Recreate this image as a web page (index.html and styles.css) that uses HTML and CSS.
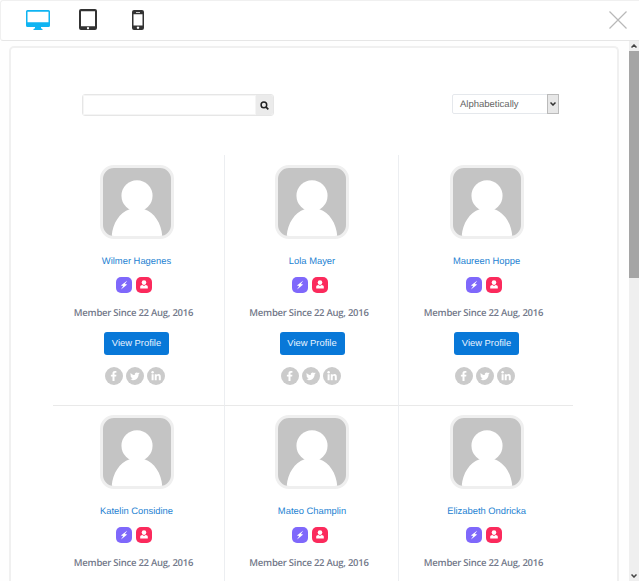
FILE: index.html
```html
<!DOCTYPE html>
<html lang="en">
<head>
<meta charset="utf-8">
<title>Members</title>
<link rel="stylesheet" href="styles.css">
</head>
<body>
<svg class="defs" aria-hidden="true">
  <symbol id="avatar" viewBox="0 0 70 70"><circle cx="35" cy="28.500" r="16"/><path d="M9 70C10 57 17 46 27.500 42.500L26 40h18l-1.500 2.500C53 46 60 57 61 70z"/></symbol>
  <symbol id="bolt" viewBox="0 0 16 16"><path d="M11.300 3.600 4.900 8.500l2.300.6L5 12.500l6.200-5-2.300-.6z"/></symbol>
  <symbol id="user" viewBox="0 0 16 16"><circle cx="8" cy="5.600" r="2.300"/><path d="M4.200 11.400V9.700c0-.9 1-1.500 2.200-1.700L8 8.900 9.600 8c1.200.2 2.200.8 2.200 1.700v1.700z"/></symbol>
  <symbol id="facebook" viewBox="0 0 18 18"><path d="M11.400 4v1.700h-1c-.7 0-.9.300-.9.800v1.200h1.900l-.25 1.900H9.500V14h-2V9.600H5.900V7.700h1.600V6.300C7.500 4.700 8.500 3.900 9.900 3.900c.7 0 1.300.1 1.500.1z"/></symbol>
  <symbol id="twitter" viewBox="0 0 18 18"><path d="M13.700 6.100c-.3.500-.7.900-1.100 1.200.1 3.200-2.300 6-5.500 6-1.100 0-2-.3-2.800-.8 1 .1 1.900-.2 2.700-.8-.8 0-1.500-.6-1.800-1.300h.9c-1-.2-1.600-1.100-1.600-2l.8.200c-.8-.6-1.100-1.700-.5-2.700 1 1.300 2.300 2.100 4 2.200-.4-1.600.7-2.700 1.900-2.700.6 0 1.100.2 1.400.6l1.300-.5c-.1.500-.5.900-.9 1.100z"/></symbol>
  <symbol id="linkedin" viewBox="0 0 18 18"><circle cx="5.600" cy="5.200" r="1.200"/><path d="M4.600 7.200h2v6h-2zM7.700 7.200h2V8c.4-.6 1-1 1.900-1 1.500 0 2.200 1 2.200 2.700v3.500h-2V10c0-.8-.3-1.300-.9-1.300-.8 0-1.200.6-1.200 1.300v3.200h-2z"/></symbol>
</svg>

<header class="topbar">
  <svg class="desktop" width="24" height="20" viewBox="0 0 24 20"><path fill="#0fb4f2" fill-rule="evenodd" d="M1.500 0h21Q24 0 24 1.500v14Q24 17 22.500 17H15v1.200l1.500.8v1h-9v-1l1.500-.8V17H1.500Q0 17 0 15.500v-14Q0 0 1.500 0zM1.500 1.700v10.500h21V1.700z"/></svg>
  <svg class="tablet" width="18" height="21" viewBox="0 0 18 21"><path fill="#333" fill-rule="evenodd" d="M2 0h14q2 0 2 2v17q0 2-2 2H2q-2 0-2-2V2Q0 0 2 0zM2 2.300v14.900h14V2.300zM9 18a1.100 1.100 0 1 0 .01 0z"/></svg>
  <svg class="phone" width="12" height="20" viewBox="0 0 12 20"><path fill="#333" fill-rule="evenodd" d="M2 0h8q2 0 2 2v16q0 2-2 2H2q-2 0-2-2V2Q0 0 2 0zM1.500 4.200v11.300h9V4.200zM4 1.900v.8h4v-.8zM6 16.500a1.200 1.200 0 1 0 .01 0z"/></svg>
  <svg class="close" width="18" height="18" viewBox="0 0 18 18"><path stroke="#b8b8b8" stroke-width="1.200" d="M.5.500l17 17M17.500.500l-17 17"/></svg>
</header>

<div class="stage">
  <main class="frame">
    <div class="controls">
      <div class="search"><input type="text" aria-label="Search"><button aria-label="Search"><svg width="9" height="9" viewBox="0 0 9 9"><circle cx="3.900" cy="3.900" r="2.800" fill="none" stroke="#222" stroke-width="1.500"/><path stroke="#222" stroke-width="1.700" d="M5.900 5.900 8.300 8.300"/></svg></button></div>
      <div class="sort"><span>Alphabetically</span><i><svg width="6" height="4" viewBox="0 0 6 4"><path fill="none" stroke="#333" stroke-width="1.500" d="M.5.500 3 3 5.500.500"/></svg></i></div>
    </div>
    <section class="members" id="members"></section>
  </main>
  <div class="scrollbar">
    <svg class="arrow" width="6" height="4" viewBox="0 0 6 4"><path fill="none" stroke="#444" stroke-width="1.500" d="M.5 3.500 3 1 5.500 3.500"/></svg>
    <div class="thumb"></div>
    <svg class="arrow down" width="6" height="4" viewBox="0 0 6 4"><path fill="none" stroke="#444" stroke-width="1.500" d="M.5.500 3 3 5.500.500"/></svg>
  </div>
</div>
<script src="members.js"></script>
</body>
</html>
```
FILE: styles.css
```css
* { box-sizing: border-box; }
body { margin: 0; width: 639px; height: 581px; overflow: hidden; background: #fff; font-family: "Liberation Sans", Arial, sans-serif; font-size: 9.4px; text-rendering: geometricPrecision; }
svg { display: block; flex: none; }
.defs { position: absolute; width: 0; height: 0; }

.topbar { height: 41px; display: flex; align-items: flex-start; padding: 10px 12px 0 25px; border: 1px solid #f0f0f0; border-width: 1px 0 1px 1px; border-bottom-color: #e6e6e6; border-radius: 3px 0 0 3px; }
.desktop { margin-top: -1px; }
.tablet { margin: -2px 0 0 29px; }
.phone { margin: -1px 0 0 35px; }
.close { margin: 0 0 0 auto; }

.stage { height: 540px; display: flex; justify-content: space-between; background: #fefefe; }
.frame { width: 610px; height: 535px; overflow: hidden; margin: 5px 0 0 9px; border: 2px solid #f0f0f0; border-bottom: 0; border-radius: 5px 5px 0 0; background: #fff; }

.controls { display: flex; justify-content: space-between; padding: 46px 58px 0 71px; }
.search { width: 192px; height: 22px; display: flex; border: 1px solid #e6e6e6; border-radius: 3px; overflow: hidden; }
.search input { flex: 1; min-width: 0; border: 1px solid #f5f5f5; padding: 0 6px; font: inherit; outline: none; }
.search button { width: 17px; border: 0; padding: 0; background: #ebebeb; display: flex; align-items: center; justify-content: center; }
.sort { width: 107px; height: 20px; display: flex; justify-content: space-between; border: 1px solid #e5e8ec; border-radius: 2px; color: #666; line-height: 19px; padding-left: 7px; }
.sort span { font-size: 9.5px; }
.sort i { width: 12px; margin: -1px; height: 20px; display: flex; align-items: center; justify-content: center; background: #e7e7e7; border: 1px solid #bbb; }

.members { width: 520px; margin: 39px 0 0 42px; display: grid; grid-template-columns: 172px 174px 174px; grid-template-rows: 251px 250px; }
.member { border: 0 solid #eceef1; border-right-width: 1px; border-bottom: 1px solid #e9e9e9; display: flex; flex-direction: column; align-items: center; padding-top: 10px; }
.member:nth-child(3n+1) { padding-right: 4px; }
.member:nth-child(3n+2) { padding-left: 1px; }
.member:nth-child(3n) { border-right: 0; padding-left: 1px; }
.member:nth-child(n+4) { padding-top: 9px; }
.avatar { width: 74px; height: 74px; flex: none; border: 3px solid #efefef; border-radius: 14px; background: #c4c4c4; overflow: hidden; }
.avatar svg { width: 68px; height: 68px; fill: #fff; }
.name { margin-top: 15px; height: 14px; line-height: 13px; color: #1d82d2; text-decoration: none; white-space: nowrap; }
.badges { display: flex; gap: 4px; margin: 9px 5px 0 0; }
.badges svg { width: 16px; height: 16px; border-radius: 5px; fill: #fff; }
.violet { background: #7f68fb; }
.red { background: #fb2a5c; }
.since { margin: 13px 6px 0 0; height: 14px; font: 600 9.5px/14px "Open Sans", sans-serif; letter-spacing: -.25px; color: #727889; white-space: nowrap; }
.profile { width: 65px; height: 23px; margin-top: 12px; border: 0; border-radius: 3px; padding: 0 0 2px; background: #0878d8; color: #e9f4ff; font: inherit; line-height: 20px; }
.social { display: flex; gap: 3px; margin: 12px 3px 0 0; }
.social svg { width: 18px; height: 18px; border-radius: 50%; background: #cbcbcb; fill: #fff; }

.scrollbar { width: 10px; height: 540px; background: #efefef; display: flex; flex-direction: column; align-items: center; }
.arrow { margin-top: 3px; }
.thumb { width: 10px; height: 227px; margin-top: 3px; background: #a5a5a5; }
.arrow.down { margin: auto 0 3px; }
```
FILE: members.js
```js
const names = ["Wilmer Hagenes", "Lola Mayer", "Maureen Hoppe", "Katelin Considine", "Mateo Champlin", "Elizabeth Ondricka"];
const icon = (id, cls = "") => `<svg class="${cls}"><use href="#${id}"/></svg>`;
const actions = `
    <button class="profile">View Profile</button>
    <div class="social">${icon("facebook")}${icon("twitter")}${icon("linkedin")}</div>`;
document.getElementById("members").innerHTML = names.map((name, i) => `
  <article class="member">
    <div class="avatar">${icon("avatar")}</div>
    <a class="name">${name}</a>
    <div class="badges">${icon("bolt", "violet")}${icon("user", "red")}</div>
    <div class="since">Member Since 22 Aug, 2016</div>${i < 3 ? actions : ""}
  </article>`).join("");
```
